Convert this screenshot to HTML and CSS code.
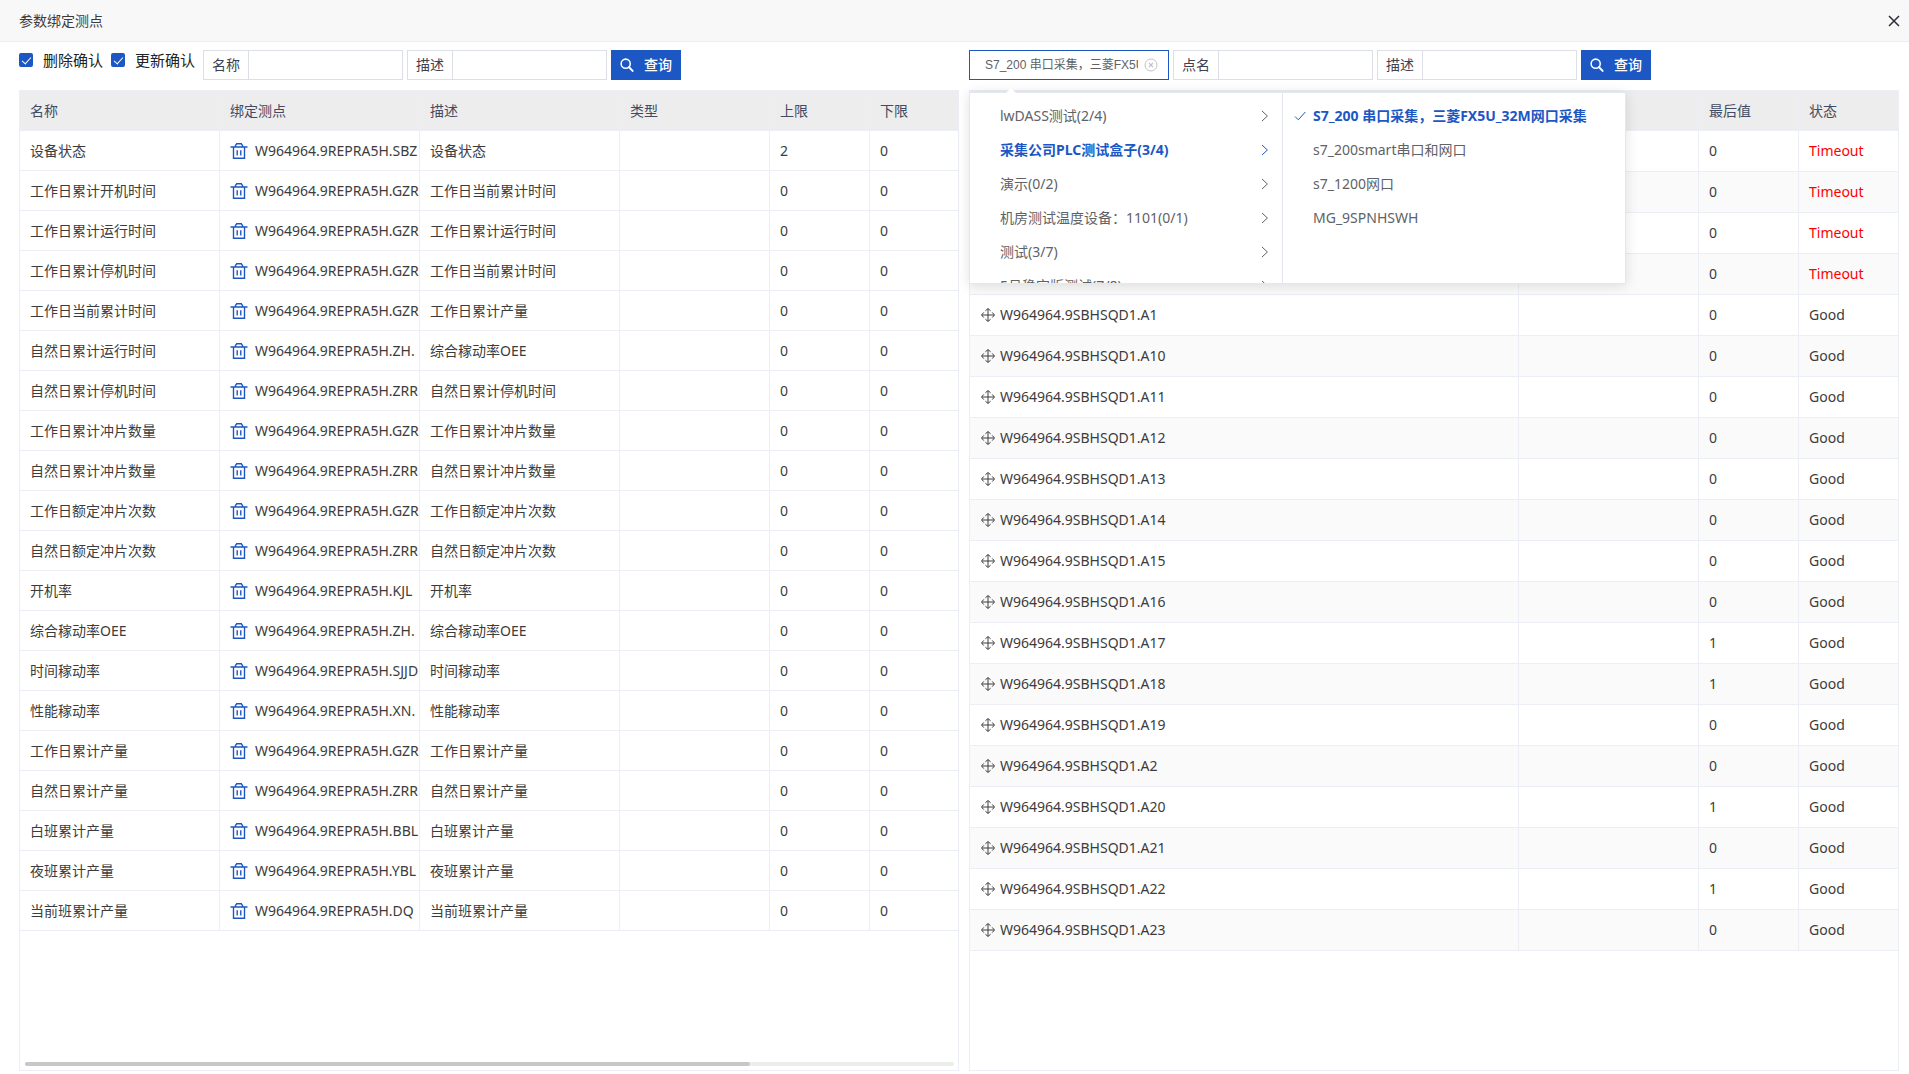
FILE: index.html
```
<!DOCTYPE html>
<html lang="zh-CN">
<head>
    <meta charset="UTF-8">
    <meta name="viewport" content="width=device-width, initial-scale=1.0">
    <title>参数绑定测点</title>
    <link rel="stylesheet" href="styles.css">
</head>
<body>
    <svg class="icon-defs" aria-hidden="true">
        <symbol id="icon-search" viewBox="0 0 16 16">
            <circle cx="6.5" cy="6.5" r="5.2" fill="none" stroke="currentColor" stroke-width="1.8"/>
            <path d="M10.4 10.6l4 4.2" fill="none" stroke="currentColor" stroke-width="2.2" stroke-linecap="round"/>
        </symbol>
        <symbol id="icon-trash" viewBox="0 0 18 18">
            <path d="M0.5 5h17M5.5 5V3.5l1.2-1.8h4.6l1.2 1.8V5M3.5 5v11.2h11V5M7.2 8.2v5.2M10.8 8.2v5.2" fill="none" stroke="currentColor" stroke-width="1.4"/>
        </symbol>
        <symbol id="icon-move" viewBox="0 0 16 16">
            <path d="M8 2v12M2 8h12" fill="none" stroke="currentColor" stroke-width="1"/>
            <path d="M5.4 3.8L8 1.5l2.6 2.3M5.4 12.2L8 14.5l2.6-2.3M3.8 5.4L1.5 8l2.3 2.6M12.2 5.4L14.5 8l-2.3 2.6" fill="none" stroke="currentColor" stroke-width="1"/>
        </symbol>
        <symbol id="icon-right" viewBox="0 0 8 12">
            <path d="M1 1l5.4 5L1 11" fill="none" stroke="currentColor" stroke-width="1"/>
        </symbol>
    </svg>

    <header class="dialog-header">
        <h1>参数绑定测点</h1>
        <button class="close-btn" aria-label="关闭">
            <svg viewBox="0 0 12 12"><path d="M1 1l10 10M11 1L1 11" stroke="currentColor" stroke-width="1.5"/></svg>
        </button>
    </header>

    <main class="dialog-body">
        <section class="panel">
            <div class="toolbar">
                <div class="checks">
                    <label><input type="checkbox" checked>删除确认</label>
                    <label><input type="checkbox" checked>更新确认</label>
                </div>
                <div class="field">
                    <label for="param-name">名称</label>
                    <input type="text" id="param-name">
                </div>
                <div class="field">
                    <label for="param-desc">描述</label>
                    <input type="text" id="param-desc">
                </div>
                <button class="search-btn"><svg><use href="#icon-search"/></svg>查询</button>
            </div>
            <div class="table-box">
                <table class="param-table">
                    <colgroup>
                        <col class="w200"><col class="w200"><col class="w200"><col class="w150"><col class="w100"><col class="w100">
                    </colgroup>
                    <thead>
                        <tr><th>名称</th><th>绑定测点</th><th>描述</th><th>类型</th><th>上限</th><th>下限</th></tr>
                    </thead>
                    <tbody id="param-rows"></tbody>
                </table>
                <div class="scroll-track"><div class="scroll-thumb"></div></div>
            </div>
        </section>

        <section class="panel panel-right">
            <div class="toolbar">
                <div class="cascader">
                    <input type="text" value="S7_200 串口采集，三菱FX5U_32M网口采集" aria-label="设备" readonly>
                    <button class="clear-btn" aria-label="清空">
                        <svg viewBox="0 0 14 14"><circle cx="7" cy="7" r="6" fill="none" stroke="currentColor"/><path d="M5 5l4 4M9 5L5 9" stroke="currentColor" stroke-width="1.2"/></svg>
                    </button>
                    <div class="cascader-panel">
                        <ul class="menu menu-group">
                            <li><button>lwDASS测试(2/4)<svg><use href="#icon-right"/></svg></button></li>
                            <li><button class="active">采集公司PLC测试盒子(3/4)<svg><use href="#icon-right"/></svg></button></li>
                            <li><button>演示(0/2)<svg><use href="#icon-right"/></svg></button></li>
                            <li><button>机房测试温度设备：1101(0/1)<svg><use href="#icon-right"/></svg></button></li>
                            <li><button>测试(3/7)<svg><use href="#icon-right"/></svg></button></li>
                            <li><button>5月稳定版测试(7/8)<svg><use href="#icon-right"/></svg></button></li>
                        </ul>
                        <ul class="menu menu-device">
                            <li><button class="active"><svg class="tick" viewBox="0 0 12 10"><path d="M1 5.5L4.3 8.8L11.3 1" fill="none" stroke="currentColor"/></svg>S7_200 串口采集，三菱FX5U_32M网口采集</button></li>
                            <li><button>s7_200smart串口和网口</button></li>
                            <li><button>s7_1200网口</button></li>
                            <li><button>MG_9SPNHSWH</button></li>
                        </ul>
                    </div>
                </div>
                <div class="field">
                    <label for="point-name">点名</label>
                    <input type="text" id="point-name">
                </div>
                <div class="field">
                    <label for="point-desc">描述</label>
                    <input type="text" id="point-desc">
                </div>
                <button class="search-btn"><svg><use href="#icon-search"/></svg>查询</button>
            </div>
            <div class="table-box">
                <table class="point-table">
                    <colgroup>
                        <col><col class="w180"><col class="w100"><col class="w100">
                    </colgroup>
                    <thead>
                        <tr><th></th><th></th><th>最后值</th><th>状态</th></tr>
                    </thead>
                    <tbody id="point-rows"></tbody>
                </table>
            </div>
        </section>
    </main>

    <script>
        // 名称, 测点, 描述, 上限
        const params = [
            ["设备状态", "SBZ", "设备状态", 2],
            ["工作日累计开机时间", "GZR", "工作日当前累计时间", 0],
            ["工作日累计运行时间", "GZR", "工作日累计运行时间", 0],
            ["工作日累计停机时间", "GZR", "工作日当前累计时间", 0],
            ["工作日当前累计时间", "GZR", "工作日累计产量", 0],
            ["自然日累计运行时间", "ZH.", "综合稼动率OEE", 0],
            ["自然日累计停机时间", "ZRR", "自然日累计停机时间", 0],
            ["工作日累计冲片数量", "GZR", "工作日累计冲片数量", 0],
            ["自然日累计冲片数量", "ZRR", "自然日累计冲片数量", 0],
            ["工作日额定冲片次数", "GZR", "工作日额定冲片次数", 0],
            ["自然日额定冲片次数", "ZRR", "自然日额定冲片次数", 0],
            ["开机率", "KJL", "开机率", 0],
            ["综合稼动率OEE", "ZH.", "综合稼动率OEE", 0],
            ["时间稼动率", "SJJD", "时间稼动率", 0],
            ["性能稼动率", "XN.", "性能稼动率", 0],
            ["工作日累计产量", "GZR", "工作日累计产量", 0],
            ["自然日累计产量", "ZRR", "自然日累计产量", 0],
            ["白班累计产量", "BBL", "白班累计产量", 0],
            ["夜班累计产量", "YBL", "夜班累计产量", 0],
            ["当前班累计产量", "DQ", "当前班累计产量", 0]
        ];
        document.getElementById("param-rows").innerHTML = params.map(p =>
            `<tr><td>${p[0]}</td>
            <td><div class="cell bind"><button aria-label="删除"><svg><use href="#icon-trash"/></svg></button>W964964.9REPRA5H.${p[1]}</div></td>
            <td>${p[2]}</td><td></td><td>${p[3]}</td><td>0</td></tr>`
        ).join("");

        // 测点, 最后值, 状态
        const points = [
            ["", 0, "Timeout"], ["", 0, "Timeout"], ["", 0, "Timeout"], ["", 0, "Timeout"],
            ["A1", 0, "Good"], ["A10", 0, "Good"], ["A11", 0, "Good"], ["A12", 0, "Good"],
            ["A13", 0, "Good"], ["A14", 0, "Good"], ["A15", 0, "Good"], ["A16", 0, "Good"],
            ["A17", 1, "Good"], ["A18", 1, "Good"], ["A19", 0, "Good"], ["A2", 0, "Good"],
            ["A20", 1, "Good"], ["A21", 0, "Good"], ["A22", 1, "Good"], ["A23", 0, "Good"]
        ];
        document.getElementById("point-rows").innerHTML = points.map(p => {
            const name = p[0] ? `<div class="cell point"><svg><use href="#icon-move"/></svg>W964964.9SBHSQD1.${p[0]}</div>` : "";
            return `<tr><td>${name}</td><td></td><td>${p[1]}</td><td class="${p[2].toLowerCase()}">${p[2]}</td></tr>`;
        }).join("");
    </script>
</body>
</html>
```
FILE: styles.css
```
* {
    box-sizing: border-box;
}
body {
    margin: 0;
    height: 100vh;
    display: flex;
    flex-direction: column;
    overflow: hidden;
    background-color: #fff;
    color: #3c3c3c;
    font-family: "Noto Sans", "Noto Sans CJK SC", sans-serif;
    font-size: 14px;
    line-height: 20px;
}
button, input {
    font: inherit;
    color: inherit;
    margin: 0;
    padding: 0;
    border: none;
    background: none;
    outline: none;
}
button {
    cursor: pointer;
}
.icon-defs {
    display: none;
}

/* 标题栏 */
.dialog-header {
    display: flex;
    justify-content: space-between;
    align-items: center;
    height: 42px;
    padding: 0 9px 0 19px;
    background-color: #f8f8f8;
    border-bottom: 1px solid #eee;
}
.dialog-header h1 {
    margin: 0;
    font-size: 14px;
    font-weight: normal;
}
.close-btn {
    display: flex;
    color: #2b2d3b;
}
.close-btn svg {
    width: 12px;
    height: 12px;
}

/* 左右两栏 */
.dialog-body {
    flex: 1;
    display: flex;
    min-height: 0;
    padding: 8px 10px 3px 19px;
}
.panel {
    width: 50%;
    display: flex;
    flex-direction: column;
    gap: 10px;
}
.panel-right {
    padding-left: 10px;
}
.toolbar {
    display: flex;
    gap: 4px;
    height: 30px;
}
.checks {
    display: flex;
    gap: 8px;
    width: 180px;
    height: 20px;
    font-size: 15px;
    color: #222;
    white-space: nowrap;
}
.checks label {
    display: flex;
    align-items: center;
    gap: 10px;
}
.checks input {
    appearance: none;
    width: 14px;
    height: 14px;
    border-radius: 2px;
    background-color: #1c57c4;
    display: grid;
    place-items: center;
}
.checks input:checked::after {
    content: "";
    width: 8px;
    height: 4px;
    border: solid #fff;
    border-width: 0 0 1px 1px;
    transform: rotate(-48deg);
    margin-bottom: 2px;
}
.field {
    display: flex;
    width: 200px;
    border: 1px solid #dcdfe6;
}
.field label {
    padding: 0 8px;
    line-height: 28px;
    color: #3d4050;
    border-right: 1px solid #dcdfe6;
}
.field input {
    flex: 1;
    min-width: 0;
    padding: 0 8px;
}
.search-btn {
    display: flex;
    align-items: center;
    gap: 10px;
    width: 70px;
    padding-left: 9px;
    background-color: #1c57c4;
    color: #fff;
    font-weight: 500;
}
.search-btn svg {
    width: 14px;
    height: 14px;
}

/* 设备级联选择 */
.cascader {
    position: relative;
    display: flex;
    align-items: center;
    width: 200px;
    padding: 0 10px 0 15px;
    border: 1px solid #1c57c4;
    color: #606266;
}
.cascader > input {
    flex: 1;
    min-width: 0;
    font-family: "Liberation Sans", "Noto Sans CJK SC", sans-serif;
    font-size: 12px;
}
.clear-btn {
    display: flex;
    margin-left: 6px;
    color: #c0c4cc;
}
.clear-btn svg {
    width: 14px;
    height: 14px;
}
.cascader-panel {
    position: absolute;
    top: 41px;
    left: -1px;
    z-index: 10;
    display: flex;
    width: 657px;
    height: 192px;
    background-color: #fff;
    border: 1px solid #e4e7ed;
    box-shadow: 0 2px 12px rgba(0, 0, 0, 0.12);
}
.cascader-panel::before {
    content: "";
    position: absolute;
    top: -5px;
    left: 35px;
    border: 6px solid transparent;
    border-top: none;
    border-bottom-color: #fff;
}
.menu {
    margin: 0;
    padding: 6px 0;
    list-style: none;
    overflow: hidden;
}
.menu-group {
    width: 313px;
    border-right: 1px solid #e4e7ed;
}
.menu-device {
    flex: 1;
}
.menu button {
    position: relative;
    display: flex;
    align-items: center;
    justify-content: space-between;
    width: 100%;
    height: 34px;
    padding: 0 13px 0 30px;
    white-space: nowrap;
}
.menu svg {
    width: 8px;
    height: 12px;
}
.menu .tick {
    position: absolute;
    left: 11px;
    width: 12px;
    height: 10px;
}
.menu .active {
    color: #1c57c4;
    font-weight: bold;
}

/* 表格 */
.table-box {
    position: relative;
    flex: 1;
    min-height: 0;
    overflow: hidden;
    border: 1px solid #ebeef5;
}
table {
    table-layout: fixed;
    border-collapse: separate;
    border-spacing: 0;
}
.param-table {
    width: 950px;
}
.point-table {
    width: calc(100% + 1px);
}
.w100 {
    width: 100px;
}
.w150 {
    width: 150px;
}
.w180 {
    width: 180px;
}
.w200 {
    width: 200px;
}
th, td {
    height: 40px;
    padding: 0 0 0 10px;
    border-right: 1px solid #ebeef5;
    border-bottom: 1px solid #ebeef5;
    text-align: left;
    white-space: nowrap;
    overflow: hidden;
}
th {
    background-color: #ededed;
    color: #444a63;
    font-weight: normal;
}
.point-table td {
    height: 41px;
}
.point-table tbody tr:nth-child(even) {
    background-color: #fafafa;
}
.cell {
    display: flex;
    align-items: center;
}
.bind {
    gap: 7px;
}
.bind button {
    display: flex;
    color: #1c57c4;
}
.bind svg {
    width: 18px;
    height: 18px;
}
.point {
    gap: 4px;
}
.point svg {
    width: 16px;
    height: 16px;
}
.point-table .timeout {
    color: #f00;
}
.scroll-track {
    position: absolute;
    left: 5px;
    right: 4px;
    bottom: 4px;
    height: 4px;
    border-radius: 2px;
    background-color: #ededed;
}
.scroll-thumb {
    width: 78%;
    height: 4px;
    border-radius: 2px;
    background-color: #c7c7c7;
}
```
